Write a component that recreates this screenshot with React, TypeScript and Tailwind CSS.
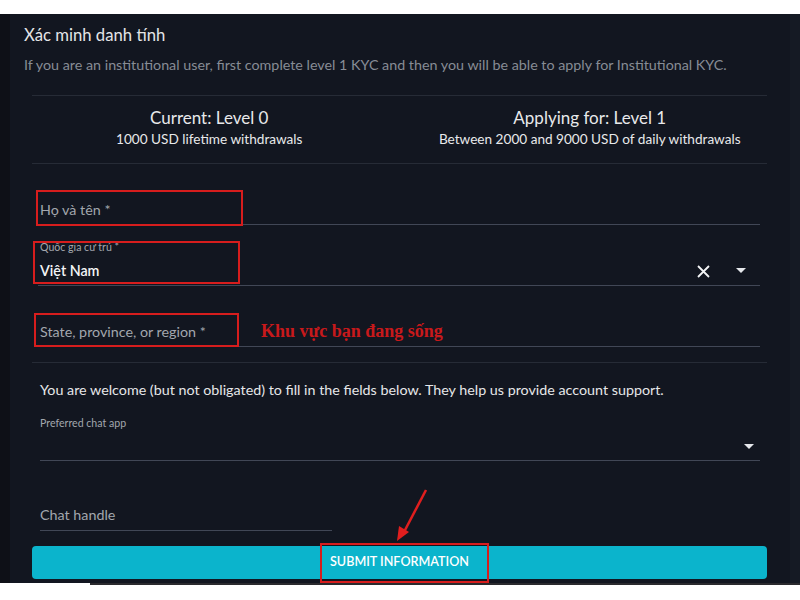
import React from "react";

const Caret = () => (
  <svg width="10" height="6" viewBox="0 0 10 6"><path d="M0 0 L10 0 L5 5 Z" fill="#e5e7eb" /></svg>
);

export default function App() {
  return (
    <div className="w-[800px] h-[600px] bg-white flex flex-col overflow-hidden" style={{ fontFamily: "Lato, 'Noto Sans', sans-serif" }}>
      <div className="h-[14px] bg-white" />
      <div className="flex h-[569px]">
        <div className="w-[10px] bg-[#0e1017]" />
        <div className="flex-1 bg-[#121620] flex flex-col">
          <div className="pl-[14px] pt-[11px] text-[16.7px] leading-[20px] text-[#e4e5e7]">Xác minh danh tính</div>
          <div className="pl-[14px] mt-[11px] text-[14.3px] leading-[18px] text-[#878c95] whitespace-nowrap">
            If you are an institutional user, first complete level 1 KYC and then you will be able to apply for Institutional KYC.
          </div>
          <div className="ml-[22px] w-[735px] mt-[21px] flex flex-col">
            <div className="border-t border-[#262b36] grid grid-cols-2 pt-[12px] pb-[15px] text-[#e8e9eb]">
              <div className="flex flex-col items-center">
                <div className="text-[17px] leading-[20px] pr-[13px]">Current: Level 0</div>
                <div className="text-[13.6px] leading-[18px] mt-[2px] pr-[13px]">1000 USD lifetime withdrawals</div>
              </div>
              <div className="flex flex-col items-center">
                <div className="text-[17px] leading-[20px] pl-[13px]">Applying for: Level 1</div>
                <div className="text-[13.6px] leading-[18px] mt-[2px] pl-[13px]">Between 2000 and 9000 USD of daily withdrawals</div>
              </div>
            </div>
            <div className="border-t border-[#262b36] flex flex-col">
              {/* Field 1 */}
              <div className="relative ml-[6px] w-[722px] mt-[36px] pb-[4px] border-b border-[#414756]">
                <div className="pl-[2px] text-[14.3px] leading-[20px] text-[#a3a7ae]">Họ và tên *</div>
                <div className="absolute top-[-10px] left-[-2px] w-[207px] h-[36px] border-2 border-[#d71d1d]" />
              </div>
              {/* Field 2 */}
              <div className="relative ml-[6px] w-[722px] mt-[16px] pb-[4px] border-b border-[#414756]">
                <div className="pl-[2px] text-[10.6px] leading-[12px] text-[#a3a7ae]">Quốc gia cư trú *</div>
                <div className="flex items-center mt-[8px] h-[20px]">
                  <div className="pl-[2px] text-[14.3px] leading-[20px] text-[#f3f4f6] font-semibold flex-1">Việt Nam</div>
                  <svg width="13" height="13" viewBox="0 0 13 13" className="mr-[26px]">
                    <path d="M1 1 L12 12 M12 1 L1 12" stroke="#f3f4f6" strokeWidth="1.8" />
                  </svg>
                  <div className="mr-[14px]"><Caret /></div>
                </div>
                <div className="absolute top-0 left-[-5px] w-[207px] h-[43px] border-2 border-[#d71d1d]" />
              </div>
              {/* Field 3 */}
              <div className="relative ml-[6px] w-[722px] mt-[36px] pb-[4px] border-b border-[#414756]">
                <div className="pl-[2px] text-[14.3px] leading-[20px] text-[#a3a7ae]">State, province, or region *</div>
                <div className="absolute top-[-9px] left-[-4px] w-[205px] h-[34px] border-2 border-[#d71d1d]" />
                <div className="absolute top-[-1px] left-[223px] text-[18px] leading-[20px] font-bold text-[#c8191b] whitespace-nowrap" style={{ fontFamily: "'Liberation Serif', 'DejaVu Serif', serif" }}>
                  Khu vực bạn đang sống
                </div>
              </div>
              <div className="mt-[15px] border-t border-[#262b36]" />
              <div className="ml-[8px] mt-[17px] text-[14.3px] leading-[20px] text-[#e6e7e9] whitespace-nowrap">
                You are welcome (but not obligated) to fill in the fields below. They help us provide account support.
              </div>
              <div className="ml-[8px] w-[720px] mt-[17px] border-b border-[#414756]">
                <div className="text-[10.6px] leading-[12px] text-[#a3a7ae]">Preferred chat app</div>
                <div className="h-[31px] flex items-center justify-end pr-[6px] pt-[4px]"><Caret /></div>
              </div>
              <div className="ml-[8px] w-[292px] mt-[44px] pb-[5px] border-b border-[#414756]">
                <div className="text-[14.3px] leading-[20px] text-[#a3a7ae]">Chat handle</div>
              </div>
              <div className="relative mt-[15px]">
                <button className="w-full h-[33px] rounded-[4px] bg-[#0bb4cc] text-white text-[12.6px] font-semibold">
                  SUBMIT INFORMATION
                </button>
                <div className="absolute top-[-3px] left-[288px] w-[169px] h-[40px] border-2 border-[#d71d1d]" />
                <svg className="absolute top-[-58px] left-[360px]" width="40" height="56" viewBox="0 0 40 56">
                  <path d="M34 2 L12 44" stroke="#e01e1e" strokeWidth="2.5" />
                  <path d="M5 53 L7 38 L17 44 Z" fill="#e01e1e" />
                </svg>
              </div>
            </div>
          </div>
        </div>
        <div className="w-[10px] bg-[#151a24]" />
      </div>
      <div className="flex h-[2px]">
        <div className="w-[90px] bg-white" />
        <div className="flex-1 bg-[#2a2a2e]" />
      </div>
    </div>
  );
}
